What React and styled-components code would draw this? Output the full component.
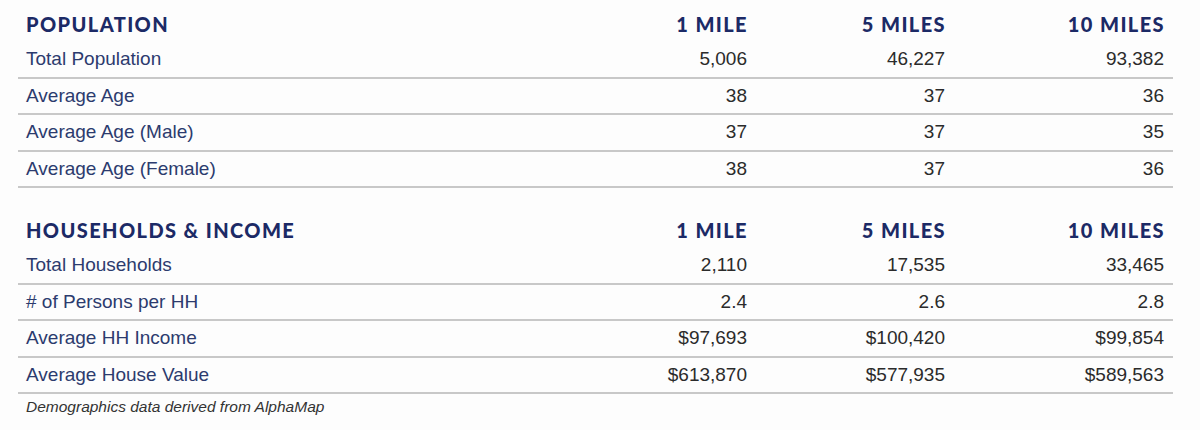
import React from "react";
import styled, { createGlobalStyle } from "styled-components";

const sections = [
  {
    title: "POPULATION",
    rows: [
      ["Total Population", "5,006", "46,227", "93,382"],
      ["Average Age", "38", "37", "36"],
      ["Average Age (Male)", "37", "37", "35"],
      ["Average Age (Female)", "38", "37", "36"],
    ],
  },
  {
    title: "HOUSEHOLDS & INCOME",
    rows: [
      ["Total Households", "2,110", "17,535", "33,465"],
      ["# of Persons per HH", "2.4", "2.6", "2.8"],
      ["Average HH Income", "$97,693", "$100,420", "$99,854"],
      ["Average House Value", "$613,870", "$577,935", "$589,563"],
    ],
  },
];

const distances = ["1 MILE", "5 MILES", "10 MILES"];

export default function App() {
  return (
    <>
      <GlobalStyle />
      <Page>
        {sections.map((section) => (
          <Section key={section.title}>
            <HeadRow>
              <HeadCell>{section.title}</HeadCell>
              {distances.map((d) => (
                <HeadCell key={d} $right>
                  {d}
                </HeadCell>
              ))}
            </HeadRow>
            {section.rows.map(([label, ...values]) => (
              <Row key={label}>
                <Label>{label}</Label>
                {values.map((v, i) => (
                  <Value key={i}>{v}</Value>
                ))}
              </Row>
            ))}
          </Section>
        ))}
        <Note>Demographics data derived from AlphaMap</Note>
      </Page>
    </>
  );
}

const GlobalStyle = createGlobalStyle`
  body {
    margin: 0;
    background: #fdfdfd;
    font-family: "Liberation Sans", Arial, sans-serif;
  }
`;

const Page = styled.div`
  width: 1155px;
  padding: 5px 0 0 18px;
  display: flex;
  flex-direction: column;
  gap: 23px;
`;

const Section = styled.div`
  display: flex;
  flex-direction: column;
`;

const grid = `
  display: grid;
  grid-template-columns: 1fr 198px 198px 219px;
  align-items: center;
`;

const HeadRow = styled.div`
  ${grid}
  height: 37px;
`;

const HeadCell = styled.div`
  padding: 0 ${(p) => (p.$right ? "8px" : "0")} 0 8px;
  text-align: ${(p) => (p.$right ? "right" : "left")};
  font-family: "Lato", sans-serif;
  font-weight: 900;
  font-size: 20px;
  letter-spacing: 1.4px;
  color: #1c2a66;
`;

const Row = styled.div`
  ${grid}
  height: 34.5px;
  border-bottom: 2px solid #c8c8c8;
`;

const Label = styled.div`
  padding-left: 8px;
  font-size: 19px;
  color: #2c3b6e;
`;

const Value = styled.div`
  padding-right: 9px;
  text-align: right;
  font-size: 19px;
  color: #2b2b2b;
`;

const Note = styled.div`
  margin-top: -19px;
  padding-left: 8px;
  font-size: 15.5px;
  font-style: italic;
  color: #333;
`;
